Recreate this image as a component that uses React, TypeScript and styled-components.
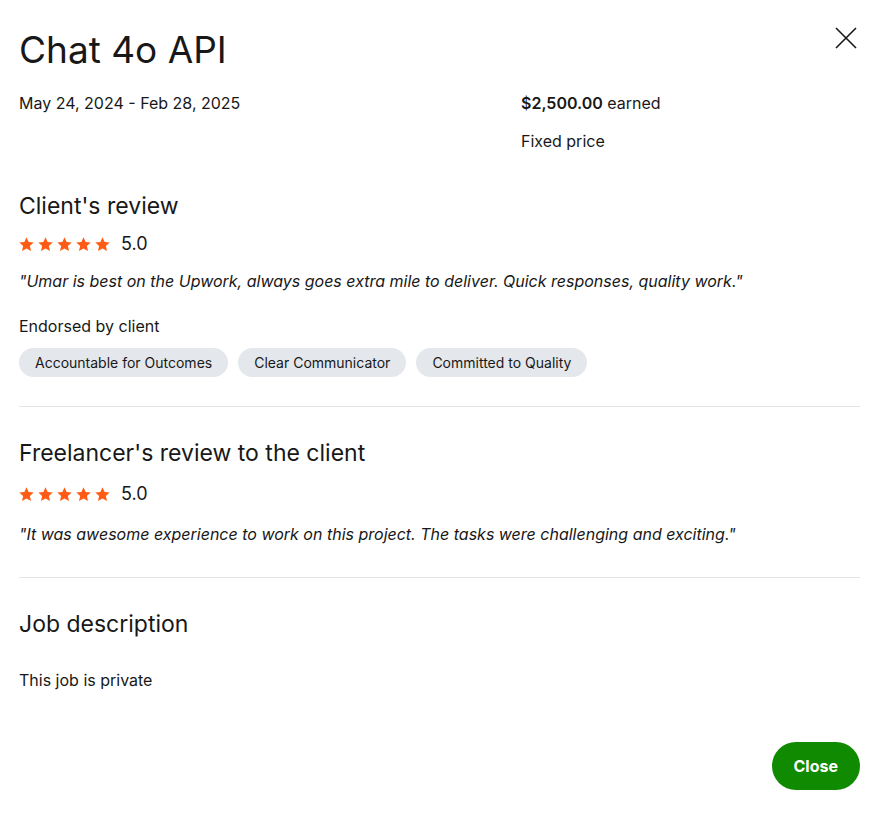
import React from "react";
import styled, { createGlobalStyle } from "styled-components";

const GlobalStyle = createGlobalStyle`
  html, body { margin: 0; padding: 0; background: #fff; }
  body {
    font-family: Inter, "Liberation Sans", Arial, sans-serif;
    color: #181818;
    -webkit-font-smoothing: antialiased;
  }
`;

const Modal = styled.div`
  width: 880px;
  min-height: 815px;
  box-sizing: border-box;
  padding: 28px 20px 25px 19px;
  display: flex;
  flex-direction: column;
`;

const Header = styled.div`
  display: flex;
  justify-content: space-between;
  align-items: flex-start;
`;

const Title = styled.h1`
  margin: 0;
  font-size: 37px;
  font-weight: 400;
  line-height: 44px;
  color: #181818;
`;

const CloseIcon = styled.button`
  border: 0;
  background: none;
  padding: 0;
  margin: -2px 2px 0 0;
  width: 24px;
  height: 24px;
  cursor: pointer;
  color: #181818;
`;

const Meta = styled.div`
  display: grid;
  grid-template-columns: 502px 1fr;
  margin-top: 20px;
`;

const MetaCol = styled.div`
  display: flex;
  flex-direction: column;
  gap: 16px;
`;

const Text = styled.div`
  font-size: 16px;
  line-height: 22px;
  color: #181818;
`;

const Strong = styled.span`
  font-weight: 600;
`;

const Section = styled.section<{ $top: number; $bottom: number }>`
  padding: ${(p) => `${p.$top}px 0 ${p.$bottom}px`};
  border-bottom: 1px solid #e4e5e7;
`;

const LastSection = styled.section`
  padding-top: 31px;
  flex: 1;
`;

const Heading = styled.h2`
  margin: 0;
  font-size: 23px;
  font-weight: 400;
  line-height: 30px;
  color: #181818;
`;

const RatingRow = styled.div<{ $gap: number }>`
  display: flex;
  align-items: center;
  margin-top: ${(p) => p.$gap}px;
  gap: 11px;
`;

const Stars = styled.div`
  display: flex;
  gap: 4px;
`;

const Score = styled.span`
  font-size: 18px;
  line-height: 24px;
`;

const Quote = styled.p<{ $gap: number }>`
  margin: ${(p) => p.$gap}px 0 0;
  font-size: 16px;
  font-style: italic;
  line-height: 24px;
  color: #181818;
`;

const Endorsed = styled.div`
  margin-top: 22px;
  font-size: 16px;
  line-height: 22px;
`;

const Chips = styled.div`
  display: flex;
  gap: 10px;
  margin-top: 11px;
`;

const Chip = styled.span`
  display: inline-flex;
  align-items: center;
  height: 29px;
  padding: 0 16px;
  border-radius: 15px;
  background: #e4e8ed;
  font-size: 14px;
  color: #181818;
`;

const Private = styled(Text)`
  margin-top: 30px;
`;

const Footer = styled.div`
  display: flex;
  justify-content: flex-end;
`;

const CloseButton = styled.button`
  border: 0;
  background: #108a00;
  color: #fff;
  font-family: Inter, "Liberation Sans", Arial, sans-serif;
  font-size: 16px;
  font-weight: 700;
  height: 48px;
  padding: 0 22px;
  border-radius: 24px;
  cursor: pointer;
`;

const Star = () => (
  <svg width="15" height="15" viewBox="0 0 24 24" aria-hidden="true">
    <path
      fill="#ff5b14"
      d="M12 0.5l3.4 7.6 8.1.8-6.1 5.5 1.8 8.1L12 18.3l-7.2 4.2 1.8-8.1L0.5 8.9l8.1-.8z"
    />
  </svg>
);

const Rating = ({ value, gap }: { value: string; gap: number }) => (
  <RatingRow $gap={gap}>
    <Stars>
      {[0, 1, 2, 3, 4].map((i) => (
        <Star key={i} />
      ))}
    </Stars>
    <Score>{value}</Score>
  </RatingRow>
);

const endorsements = [
  "Accountable for Outcomes",
  "Clear Communicator",
  "Committed to Quality",
];

export default function App() {
  return (
    <>
      <GlobalStyle />
      <Modal>
        <Header>
          <Title>Chat 4o API</Title>
          <CloseIcon aria-label="Close">
            <svg width="24" height="24" viewBox="0 0 24 24" fill="none">
              <path
                d="M2 2l20 20M22 2L2 22"
                stroke="#181818"
                strokeWidth="1.6"
              />
            </svg>
          </CloseIcon>
        </Header>

        <Meta>
          <MetaCol>
            <Text>May 24, 2024 - Feb 28, 2025</Text>
          </MetaCol>
          <MetaCol>
            <Text>
              <Strong>$2,500.00</Strong> earned
            </Text>
            <Text>Fixed price</Text>
          </MetaCol>
        </Meta>

        <Section $top={39} $bottom={29}>
          <Heading>Client's review</Heading>
          <Rating value="5.0" gap={11} />
          <Quote $gap={13}>
            "Umar is best on the Upwork, always goes extra mile to deliver.
            Quick responses, quality work."
          </Quote>
          <Endorsed>Endorsed by client</Endorsed>
          <Chips>
            {endorsements.map((e) => (
              <Chip key={e}>{e}</Chip>
            ))}
          </Chips>
        </Section>

        <Section $top={31} $bottom={31}>
          <Heading>Freelancer's review to the client</Heading>
          <Rating value="5.0" gap={14} />
          <Quote $gap={16}>
            "It was awesome experience to work on this project. The tasks were
            challenging and exciting."
          </Quote>
        </Section>

        <LastSection>
          <Heading>Job description</Heading>
          <Private>This job is private</Private>
        </LastSection>

        <Footer>
          <CloseButton>Close</CloseButton>
        </Footer>
      </Modal>
    </>
  );
}
